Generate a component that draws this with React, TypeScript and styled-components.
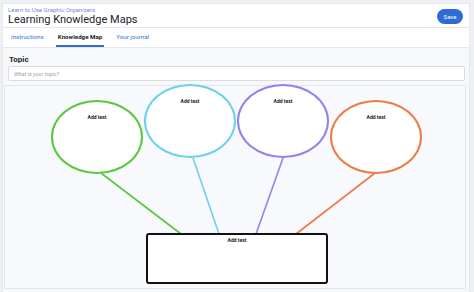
import React from "react";
import styled, { createGlobalStyle } from "styled-components";

const Global = createGlobalStyle`
  html, body { margin: 0; padding: 0; background: #eef0f3; }
  body { font-family: Roboto, "Liberation Sans", Arial, sans-serif; width: 474px; height: 292px; overflow: hidden; }
  * { box-sizing: border-box; }
`;

const Card = styled.div`
  margin: 3px 4px 0 2px;
  height: 289px;
  background: #ffffff;
  border: 1px solid #e4e7eb;
  border-bottom: none;
  display: flex;
  flex-direction: column;
`;

const Header = styled.div`
  height: 24px;
  display: flex;
  align-items: center;
  justify-content: space-between;
  padding: 0 6px 0 5px;
  border-bottom: 1px solid #e6e8ec;
`;

const Titles = styled.div`
  display: flex;
  flex-direction: column;
`;

const Crumb = styled.div`
  font-size: 6.1px;
  line-height: 8px;
  color: #6b8fd2;
`;

const Title = styled.div`
  font-size: 11px;
  line-height: 12px;
  color: #222428;
`;

const SaveButton = styled.button`
  border: none;
  background: #2f6bd6;
  color: #ffffff;
  font-family: Roboto, "Liberation Sans", Arial, sans-serif;
  font-size: 6px;
  height: 15px;
  width: 26px;
  border-radius: 8px;
  padding: 0;
  margin-top: 1px;
`;

const Tabs = styled.div`
  height: 20px;
  display: flex;
  align-items: stretch;
  gap: 10px;
  padding-left: 6px;
  border-bottom: 1px solid #e6e8ec;
`;

const Tab = styled.div<{ $active?: boolean }>`
  font-size: 6.2px;
  padding: 0 2px;
  display: flex;
  align-items: center;
  color: ${(p) => (p.$active ? "#222428" : "#3a72d6")};
  font-weight: ${(p) => (p.$active ? 700 : 400)};
  border-bottom: 2px solid ${(p) => (p.$active ? "#2f6bd6" : "transparent")};
`;

const Body = styled.div`
  flex: 1;
  background: #f7f8fa;
  display: flex;
  flex-direction: column;
  padding: 7px 3px 0 1px;
`;

const Label = styled.div`
  font-size: 8px;
  font-weight: 700;
  color: #25272b;
  padding-left: 5px;
  line-height: 10px;
`;

const Input = styled.div`
  margin: 1px 1px 0 4px;
  height: 15px;
  background: #ffffff;
  border: 1px solid #d9dce1;
  border-radius: 2px;
  display: flex;
  align-items: center;
  padding-left: 5px;
  font-size: 5.5px;
  font-style: italic;
  color: #9a9ea6;
`;

const Canvas = styled.div`
  position: relative;
  margin-top: 4px;
  height: 204px;
  background: #f7f9fd;
  border: 1px solid #e2e6ee;
`;

const Wires = styled.svg`
  position: absolute;
  left: 0;
  top: 0;
`;

const Bubble = styled.div<{ $color: string; $x: number; $y: number }>`
  position: absolute;
  left: ${(p) => p.$x}px;
  top: ${(p) => p.$y}px;
  width: 92px;
  height: 74px;
  border: 2px solid ${(p) => p.$color};
  border-radius: 50%;
  background: #ffffff;
  display: flex;
  justify-content: center;
  padding-top: 12px;
`;

const NodeText = styled.div`
  font-size: 5px;
  font-weight: 700;
  color: #222;
  line-height: 6px;
`;

const Hub = styled.div`
  position: absolute;
  left: 141px;
  top: 147px;
  width: 182px;
  height: 51px;
  border: 2px solid #111;
  border-radius: 3px;
  background: #ffffff;
  display: flex;
  justify-content: center;
  padding-top: 2px;
`;

const nodes = [
  { color: "#5cc63c", x: 46, y: 14 },
  { color: "#6dd1ec", x: 139, y: -2 },
  { color: "#9182ec", x: 232, y: -2 },
  { color: "#ef7a47", x: 325, y: 14 },
];

const wires = [
  { color: "#5cc63c", x1: 96, y1: 87, x2: 176, y2: 148 },
  { color: "#6dd1ec", x1: 188, y1: 72, x2: 214, y2: 148 },
  { color: "#9182ec", x1: 278, y1: 72, x2: 251, y2: 148 },
  { color: "#ef7a47", x1: 370, y1: 87, x2: 291, y2: 148 },
];

export default function App() {
  return (
    <>
      <Global />
      <Card>
        <Header>
          <Titles>
            <Crumb>Learn to Use Graphic Organizers</Crumb>
            <Title>Learning Knowledge Maps</Title>
          </Titles>
          <SaveButton>Save</SaveButton>
        </Header>
        <Tabs>
          <Tab>Instructions</Tab>
          <Tab $active>Knowledge Map</Tab>
          <Tab>Your journal</Tab>
        </Tabs>
        <Body>
          <Label>Topic</Label>
          <Input>What is your topic?</Input>
          <Canvas>
            <Wires width="464" height="204">
              {wires.map((w, i) => (
                <line key={i} x1={w.x1} y1={w.y1} x2={w.x2} y2={w.y2} stroke={w.color} strokeWidth={1.6} />
              ))}
            </Wires>
            {nodes.map((n, i) => (
              <Bubble key={i} $color={n.color} $x={n.x} $y={n.y}>
                <NodeText>Add text</NodeText>
              </Bubble>
            ))}
            <Hub>
              <NodeText>Add text</NodeText>
            </Hub>
          </Canvas>
        </Body>
      </Card>
    </>
  );
}
